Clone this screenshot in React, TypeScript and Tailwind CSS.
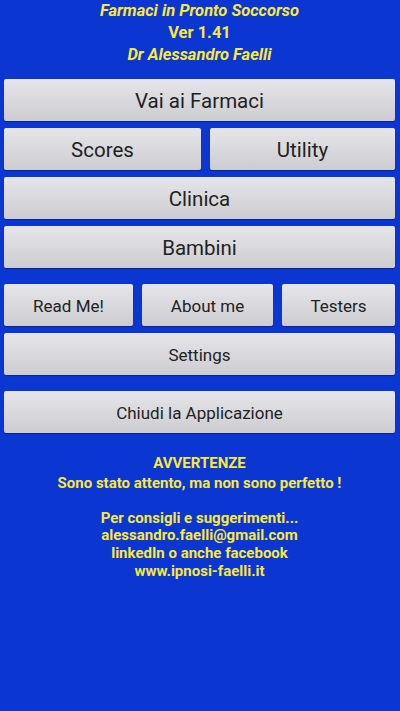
import React from "react";

function Btn({ label, className = "" }: { label: string; className?: string }) {
	return (
		<button
			type="button"
			className={`h-[42px] pt-[3px] rounded-[2px] bg-gradient-to-b from-[#e6e6ea] to-[#cdcdd1] text-[#222] shadow-[0_1px_1px_rgba(0,0,0,0.35)] ${className}`}
		>
			{label}
		</button>
	);
}

export default function App() {
	return (
		<div
			className="min-h-[711px] w-[400px] bg-[#0b36d2] pl-1 pr-[5px]"
			style={{ fontFamily: "Roboto, 'Liberation Sans', sans-serif" }}
		>
			{/* header */}
			<div className="flex flex-col items-center text-[#f8e93c] font-bold text-[16.5px] leading-[21px]">
				<div className="italic">Farmaci in Pronto Soccorso</div>
				<div className="mt-px">Ver 1.41</div>
				<div className="italic mt-px">Dr Alessandro Faelli</div>
			</div>

			{/* main buttons */}
			<div className="mt-[14px] flex flex-col gap-[7px]">
				<Btn label="Vai ai Farmaci" className="text-[20.5px]" />
				<div className="flex gap-[9px]">
					<Btn label="Scores" className="w-[197px] text-[20.5px]" />
					<Btn label="Utility" className="flex-1 text-[20.5px]" />
				</div>
				<Btn label="Clinica" className="text-[20.5px]" />
				<Btn label="Bambini" className="text-[20.5px]" />
			</div>

			<div className="mt-4 flex flex-col gap-[7px]">
				<div className="flex gap-[9px]">
					<Btn label="Read Me!" className="w-[129px] text-[17px]" />
					<Btn label="About me" className="w-[131px] text-[17px]" />
					<Btn label="Testers" className="flex-1 text-[17px]" />
				</div>
				<Btn label="Settings" className="text-[17px]" />
			</div>

			<div className="mt-4 flex flex-col">
				<Btn label="Chiudi la Applicazione" className="text-[17px]" />
			</div>

			{/* footer notes */}
			<div className="mt-[22px] flex flex-col items-center text-center text-[15px] font-bold leading-[17.8px] text-[#f8e93c]">
				<div>AVVERTENZE</div>
				<div className="mt-[2px]">Sono stato attento, ma non sono perfetto !</div>
				<div className="mt-[17px]">Per consigli e suggerimenti...</div>
				<div>alessandro.faelli@gmail.com</div>
				<div>linkedIn o anche facebook</div>
				<div>www.ipnosi-faelli.it</div>
			</div>
		</div>
	);
}
